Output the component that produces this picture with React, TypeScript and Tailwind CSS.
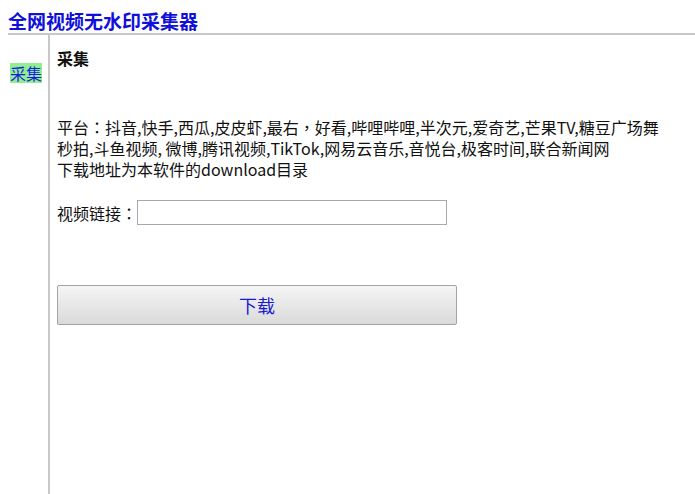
import React from "react";

// full-width punctuation sits centred in the reference, as in TC fonts
const P = ({ children }: { children: React.ReactNode }) => (
  <span className="font-['Noto_Sans_CJK_TC',sans-serif]">{children}</span>
);

const App = () => {
  return (
    <div className="h-[494px] flex flex-col bg-white text-[#111] font-['Noto_Sans_CJK_SC','Microsoft_YaHei',sans-serif]">
      <div className="ml-2 pt-[9px] border-b-2 border-[#c8c8c8]">
        <h1 className="text-[19px] leading-[24px] font-bold text-[#1010d8]">全网视频无水印采集器</h1>
      </div>

      <div className="flex flex-1">
        <div className="ml-2 w-[42px] shrink-0 border-r-2 border-[#c8c8c8] pt-[26px] pl-[2px]">
          <span className="inline-block bg-[#90ee90] text-[16px] leading-[20px] text-[#1a1ae0] cursor-pointer">
            采集
          </span>
        </div>

        <div className="flex-1 pl-[7px] pt-[13px]">
          <h2 className="text-[16px] leading-[20px] font-bold">采集</h2>

          <div className="mt-[49px] text-[16px] leading-[21px] whitespace-nowrap">
            <p>
              平台<P>：</P>抖音,快手,西瓜,皮皮虾,最右<P>，</P>好看,哔哩哔哩,半次元,爱奇艺,芒果TV,糖豆广场舞
            </p>
            <p>秒拍,斗鱼视频, 微博,腾讯视频,TikTok,网易云音乐,音悦台,极客时间,联合新闻网</p>
            <p>下载地址为本软件的download目录</p>
          </div>

          <div className="mt-[20px] flex items-center text-[16px]">
            <label className="w-[80px] shrink-0 whitespace-nowrap leading-[20px]">
              视频链接<P>：</P>
            </label>
            <input
              type="text"
              className="w-[310px] h-[25px] border border-[#a9a9a9] bg-white px-1 text-[14px] outline-none"
            />
          </div>

          <button className="mt-[60px] w-[400px] h-[40px] rounded-[2px] border border-[#a3a3a3] bg-gradient-to-b from-[#f5f5f5] to-[#dadada] text-[18px] text-[#1a1ad0]">
            下载
          </button>
        </div>
      </div>
    </div>
  );
};

export default App;
